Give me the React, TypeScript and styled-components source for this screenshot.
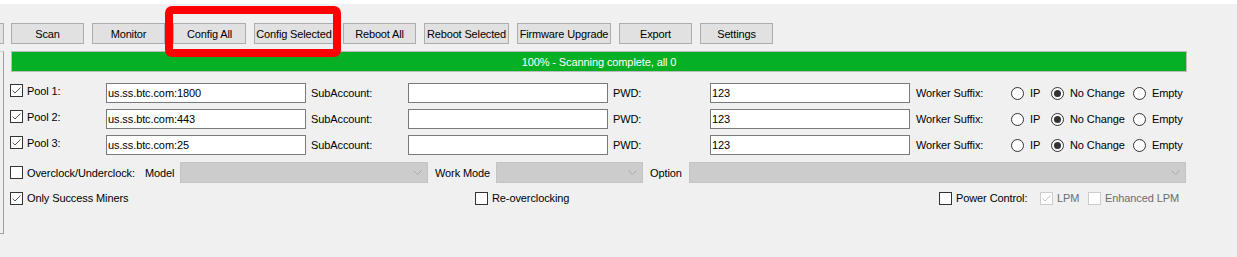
import React from 'react';
import styled, {createGlobalStyle} from 'styled-components';

const GlobalStyle = createGlobalStyle`
    html, body {
        margin: 0;
        padding: 0;
        background: #f0f0f0;
    }
    * {
        box-sizing: border-box;
    }
`;

const Window = styled.div`
    position: relative;
    width: 1237px;
    height: 257px;
    display: flex;
    background: #f0f0f0;
    border-top: 4px solid #ffffff;
    font-family: "Liberation Sans", Arial, sans-serif;
    font-size: 11px;
    letter-spacing: -0.1px;
    color: #000;
    overflow: hidden;
`;

const LeftRail = styled.div`
    width: 4px;
    display: flex;
    flex-direction: column;
`;

const RailButton = styled.div`
    margin-top: 19px;
    height: 21px;
    background: #e1e1e1;
    border: 1px solid #adadad;
    border-left: none;
`;

const RailPanel = styled.div`
    margin-top: 7px;
    height: 183px;
    border: 1px solid #a0a0a0;
    border-left: none;
    border-top-color: #d4d4d4;
`;

const Content = styled.div`
    margin-left: 6px;
    display: flex;
    flex-direction: column;
`;

const Toolbar = styled.div`
    margin-top: 19px;
    margin-left: 1px;
    display: flex;
    height: 21px;
`;

const ToolButton = styled.button<{$w: number; $ml: number}>`
    width: ${p => p.$w}px;
    margin-left: ${p => p.$ml}px;
    height: 21px;
    padding: 0;
    background: #e1e1e1;
    border: 1px solid #adadad;
    font-family: inherit;
    font-size: 11px;
    letter-spacing: -0.15px;
    color: #000;
    white-space: nowrap;
`;

const Progress = styled.div`
    margin-top: 7px;
    margin-left: 1px;
    width: 1176px;
    height: 21px;
    background: #06b025;
    border: 1px solid #bcbcbc;
    color: #fff;
    display: flex;
    align-items: center;
    justify-content: center;
`;

const PoolGrid = styled.div`
    margin-top: 11px;
    display: grid;
    grid-template-columns: 96px 200px 102px 200px 102px 200px 101px auto;
    grid-auto-rows: 20px;
    row-gap: 6px;
    align-items: center;
`;

const CheckLabel = styled.label<{$top?: boolean; $disabled?: boolean}>`
    display: flex;
    align-items: center;
    gap: 4px;
    align-self: ${p => p.$top ? 'start' : 'center'};
    margin-top: ${p => p.$top ? 1 : 0}px;
    color: ${p => p.$disabled ? '#6d6d6d' : '#000'};
    white-space: nowrap;
`;

const Box = styled.span<{$disabled?: boolean}>`
    width: 13px;
    height: 13px;
    flex: none;
    background: #fff;
    border: 1px solid ${p => p.$disabled ? '#cccccc' : '#333333'};
    display: flex;
    align-items: center;
    justify-content: center;
`;

const TextBox = styled.div`
    height: 20px;
    background: #fff;
    border: 1px solid #7a7a7a;
    padding-left: 1px;
    display: flex;
    align-items: center;
`;

const FieldLabel = styled.span<{$pl: number}>`
    padding-left: ${p => p.$pl}px;
    white-space: nowrap;
`;

const RadioGroup = styled.div`
    display: flex;
    align-items: center;
`;

const RadioItem = styled.label<{$w?: number}>`
    display: flex;
    align-items: center;
    gap: 6px;
    width: ${p => p.$w ? `${p.$w}px` : 'auto'};
    white-space: nowrap;
`;

const Circle = styled.span`
    width: 13px;
    height: 13px;
    border-radius: 50%;
    border: 1px solid #333;
    background: #fff;
    display: flex;
    align-items: center;
    justify-content: center;
`;

const Dot = styled.span`
    width: 7px;
    height: 7px;
    border-radius: 50%;
    background: #333;
`;

const ClockRow = styled.div`
    margin-top: 7px;
    height: 21px;
    display: flex;
    align-items: center;
`;

const Cell = styled.div<{$w: number; $pl?: number}>`
    width: ${p => p.$w}px;
    padding-left: ${p => p.$pl ?? 0}px;
    flex: none;
    white-space: nowrap;
`;

const Combo = styled.div<{$w: number}>`
    width: ${p => p.$w}px;
    height: 21px;
    flex: none;
    background: #cccccc;
    border: 1px solid #c4c4c4;
    display: flex;
    align-items: center;
    justify-content: flex-end;
    padding-right: 5px;
`;

const OptionsRow = styled.div`
    margin-top: 8px;
    height: 14px;
    display: flex;
    align-items: center;
`;

const Slot = styled.div<{$w?: number}>`
    width: ${p => p.$w ? `${p.$w}px` : 'auto'};
    flex: none;
    display: flex;
`;

const Highlight = styled.div`
    position: absolute;
    left: 165px;
    top: 2px;
    width: 176px;
    height: 51px;
    border: 8px solid #ff0000;
    border-radius: 7px;
    pointer-events: none;
`;

const Check = ({checked, disabled}: {checked?: boolean; disabled?: boolean}) => (
    <Box $disabled={disabled}>
        {checked && (
            <svg width='11' height='11' viewBox='0 0 11 11'>
                <polyline
                    points='1.5,5.5 4,8 9.5,2.5'
                    fill='none'
                    stroke={disabled ? '#c4c4c4' : '#555'}
                    strokeWidth='1'
                />
            </svg>
        )}
    </Box>
);

const Chevron = () => (
    <svg width='9' height='6' viewBox='0 0 9 6'>
        <polyline points='0.5,0.5 4.5,4.5 8.5,0.5' fill='none' stroke='#a8a8a8' strokeWidth='1'/>
    </svg>
);

const buttons = [
    {label: 'Scan', w: 73, ml: 0},
    {label: 'Monitor', w: 73, ml: 8},
    {label: 'Config All', w: 73, ml: 8},
    {label: 'Config Selected', w: 80, ml: 8},
    {label: 'Reboot All', w: 73, ml: 9},
    {label: 'Reboot Selected', w: 85, ml: 8},
    {label: 'Firmware Upgrade', w: 94, ml: 8},
    {label: 'Export', w: 73, ml: 8},
    {label: 'Settings', w: 73, ml: 8},
];

const pools = [
    {name: 'Pool 1:', url: 'us.ss.btc.com:1800'},
    {name: 'Pool 2:', url: 'us.ss.btc.com:443'},
    {name: 'Pool 3:', url: 'us.ss.btc.com:25'},
];

const App = () => (
    <>
        <GlobalStyle/>
        <Window>
            <LeftRail>
                <RailButton/>
                <RailPanel/>
            </LeftRail>
            <Content>
                <Toolbar>
                    {buttons.map(b => (
                        <ToolButton key={b.label} $w={b.w} $ml={b.ml}>{b.label}</ToolButton>
                    ))}
                </Toolbar>
                <Progress>100% - Scanning complete, all 0</Progress>

                <PoolGrid>
                    {pools.map(p => (
                        <React.Fragment key={p.name}>
                            <CheckLabel $top>
                                <Check checked/>
                                {p.name}
                            </CheckLabel>
                            <TextBox>{p.url}</TextBox>
                            <FieldLabel $pl={5}>SubAccount:</FieldLabel>
                            <TextBox/>
                            <FieldLabel $pl={5}>PWD:</FieldLabel>
                            <TextBox>123</TextBox>
                            <FieldLabel $pl={6}>Worker Suffix:</FieldLabel>
                            <RadioGroup>
                                <RadioItem $w={40}><Circle/>IP</RadioItem>
                                <RadioItem $w={82}><Circle><Dot/></Circle>No Change</RadioItem>
                                <RadioItem><Circle/>Empty</RadioItem>
                            </RadioGroup>
                        </React.Fragment>
                    ))}
                </PoolGrid>

                <ClockRow>
                    <Cell $w={135}>
                        <CheckLabel>
                            <Check/>
                            Overclock/Underclock:
                        </CheckLabel>
                    </Cell>
                    <Cell $w={35}>Model</Cell>
                    <Combo $w={248}><Chevron/></Combo>
                    <Cell $w={68} $pl={7}>Work Mode</Cell>
                    <Combo $w={147}><Chevron/></Combo>
                    <Cell $w={46} $pl={7}>Option</Cell>
                    <Combo $w={497}><Chevron/></Combo>
                </ClockRow>

                <OptionsRow>
                    <Slot $w={465}>
                        <CheckLabel><Check checked/>Only Success Miners</CheckLabel>
                    </Slot>
                    <Slot $w={464}>
                        <CheckLabel><Check/>Re-overclocking</CheckLabel>
                    </Slot>
                    <Slot $w={101}>
                        <CheckLabel><Check/>Power Control:</CheckLabel>
                    </Slot>
                    <Slot $w={48}>
                        <CheckLabel $disabled><Check checked disabled/>LPM</CheckLabel>
                    </Slot>
                    <Slot>
                        <CheckLabel $disabled><Check disabled/>Enhanced LPM</CheckLabel>
                    </Slot>
                </OptionsRow>
            </Content>
            <Highlight/>
        </Window>
    </>
);

export default App;
